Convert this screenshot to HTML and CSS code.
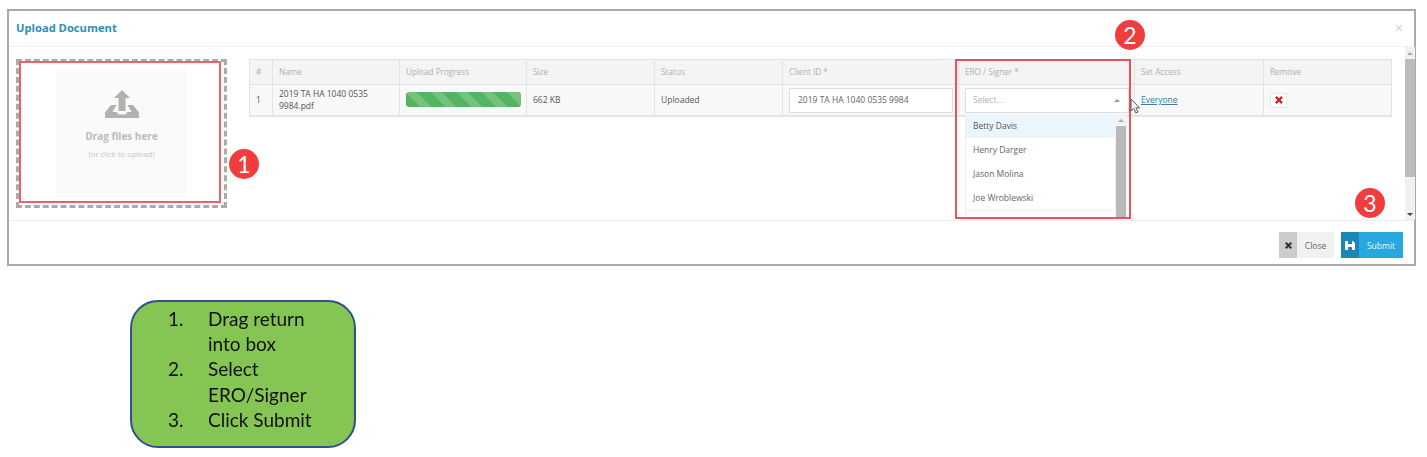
FILE: index.html
```html
<!DOCTYPE html>
<html lang="en">
<head>
<meta charset="utf-8">
<title>Upload Document</title>
<link rel="stylesheet" href="styles.css">
</head>
<body>
<div class="page">
  <section class="modal">
    <header class="modal-head">
      <h1>Upload Document</h1>
      <span class="dismiss">×</span>
    </header>
    <div class="modal-body">
      <div class="dropzone">
        <div class="drop-inner">
          <svg class="upload-icon" width="34" height="28" viewBox="0 0 34 28"><path d="M17 0L25 8H20.500V21H13.500V8H9Z"/><path d="M6 15H11.500L7.500 22H11.500L13.500 24.500H20.500L22.500 22H26.500L22.500 15H28L34 22.500V28H0V22.500Z"/></svg>
          <div class="drop-title">Drag files here</div>
          <div class="drop-sub">(or click to upload)</div>
        </div>
      </div>
      <table class="files">
        <colgroup>
          <col class="c-num"><col class="c-name"><col class="c-prog"><col class="c-size"><col class="c-status"><col class="c-client"><col class="c-ero"><col class="c-access"><col class="c-remove">
        </colgroup>
        <thead>
          <tr><th>#</th><th>Name</th><th>Upload Progress</th><th>Size</th><th>Status</th><th>Client ID *</th><th>ERO / Signer *</th><th>Set Access</th><th>Remove</th></tr>
        </thead>
        <tbody>
          <tr>
            <td>1</td>
            <td>2019 TA HA 1040 0535 9984.pdf</td>
            <td class="progress-cell"><div class="progress"></div></td>
            <td>662 KB</td>
            <td>Uploaded</td>
            <td class="field-cell"><div class="input">2019 TA HA 1040 0535 9984</div></td>
            <td class="field-cell ero-cell">
              <div class="select"><span>Select...</span><i class="caret"></i></div>
              <div class="dropdown">
                <ul>
                  <li class="active">Betty Davis</li>
                  <li>Henry Darger</li>
                  <li>Jason Molina</li>
                  <li class="last">Joe Wroblewski</li>
                </ul>
                <div class="mini-scroll"><i class="up"></i><b></b></div>
              </div>
            </td>
            <td><a class="link" href="#">Everyone</a></td>
            <td><span class="remove"><svg width="10" height="10" viewBox="0 0 9 9"><path d="M1 2.500L2.500 1L4.500 3L6.500 1L8 2.500L6 4.500L8 6.500L6.500 8L4.500 6L2.500 8L1 6.500L3 4.500Z"/></svg></span></td>
          </tr>
        </tbody>
      </table>
      <div class="scrollbar"><i class="up"></i><b></b><i class="down"></i></div>
    </div>
    <footer class="modal-foot">
      <button class="btn btn-close"><span class="btn-icon"><svg width="9" height="9" viewBox="0 0 9 9"><path d="M1 2.500L2.500 1L4.500 3L6.500 1L8 2.500L6 4.500L8 6.500L6.500 8L4.500 6L2.500 8L1 6.500L3 4.500Z"/></svg></span><span class="btn-text">Close</span></button>
      <button class="btn btn-submit"><span class="btn-icon"><svg width="10" height="9" viewBox="0 0 10 9"><path d="M0 1Q0 0 1 0H3V3H7V0H8L10 2V8Q10 9 9 9H7V6H3V9H1Q0 9 0 8Z"/></svg></span><span class="btn-text">Submit</span></button>
    </footer>
  </section>

  <div class="mark mark-drop"></div>
  <div class="mark mark-ero"></div>
  <div class="badge badge-1">1</div>
  <div class="badge badge-2">2</div>
  <div class="badge badge-3">3</div>
  <svg class="cursor" width="11" height="16" viewBox="0 0 11 16"><path d="M1 1V13L3.800 10.500L6 15L8 14L5.800 9.800H9.500Z"/></svg>

  <ol class="steps">
    <li><span>1.</span><span>Drag return into box</span></li>
    <li><span>2.</span><span>Select ERO/Signer</span></li>
    <li><span>3.</span><span>Click Submit</span></li>
  </ol>
</div>
</body>
</html>
```

FILE: styles.css
```css
* { box-sizing: border-box; }
html, body { margin: 0; background: #fff; }
body { font-family: "Open Sans", "Noto Sans", sans-serif; font-size: 8.500px; color: #555; }

.page {
  position: relative;
  width: 1427px;
  height: 457px;
  overflow: hidden;
  padding: 9px 0 0 7px;
  filter: blur(0.35px);
}

.modal {
  width: 1409px;
  height: 257px;
  border: 2px solid #a9a9a9;
  display: flex;
  flex-direction: column;
  background: #fff;
}

.modal-head {
  height: 36px;
  flex: none;
  display: flex;
  align-items: center;
  justify-content: space-between;
  padding: 0 11px 2px 7px;
  border-bottom: 1px solid #f0f0f0;
}
.modal-head h1 { margin: 0; font-size: 11.200px; font-weight: 700; color: #2b8fbb; }
.dismiss { font-size: 14px; color: #ccc; line-height: 1; }

.modal-body {
  height: 173px;
  flex: none;
  display: flex;
  align-items: flex-start;
  padding-left: 7px;
}

.dropzone {
  width: 211px;
  height: 149px;
  margin-top: 12px;
  border: 3px dashed #ababab;
  padding: 7px 37px 8px;
  flex: none;
}
.drop-inner {
  height: 100%;
  background: #fafafa;
  display: flex;
  flex-direction: column;
  align-items: center;
  padding-top: 21px;
  color: #bdbdbd;
}
.upload-icon { fill: #b5b1ac; }
.drop-title { margin-top: 11px; font-size: 10px; font-weight: 700; line-height: 14px; color: #bcbcbc; }
.drop-sub { margin-top: 6px; font-size: 7.700px; line-height: 11px; color: #c4c4c4; }

.files {
  width: 1142px;
  margin: 12px 13px 0 22px;
  flex: none;
  table-layout: fixed;
  border-collapse: collapse;
  border: 1px solid #e4e4e4;
  border-bottom-width: 2px;
}
.c-num { width: 23px; }
.c-name { width: 127px; }
.c-prog { width: 127px; }
.c-size { width: 128px; }
.c-status { width: 128px; }
.c-client { width: 176px; }
.c-ero { width: 176px; }
.c-access { width: 129px; }
.c-remove { width: 128px; }

.files th, .files td {
  border-left: 1px solid #e4e4e4;
  padding: 0 6px;
  text-align: left;
  font-size: 8.500px;
}
.files th {
  height: 25px;
  padding-bottom: 2px;
  font-size: 8.200px;
  font-weight: 400;
  color: #b0b0b0;
  background: #f4f4f4;
  border-bottom: 1px solid #e4e4e4;
}
.files td {
  height: 31px;
  padding-top: 1px;
  background: #f8f8f8;
  line-height: 12px;
  color: #555;
}
.files .field-cell { padding: 1px 5px 0 6px; }
.files .progress-cell { padding: 0 5px 0 6px; }

.progress {
  height: 15px;
  border-radius: 3px;
  background: repeating-linear-gradient(45deg, #55b45f 0 10px, #74c27b 10px 18px);
}

.input, .select {
  height: 25px;
  background: #fff;
  border: 1px solid #dedede;
  display: flex;
  align-items: center;
  color: #666;
}
.input { padding-left: 8px; }
.select { justify-content: space-between; padding: 0 8px 0 7px; color: #b5b5b5; }
.caret {
  border-left: 3px solid transparent;
  border-right: 3px solid transparent;
  border-bottom: 3px solid #999;
}

.ero-cell { position: relative; }
.dropdown {
  position: absolute;
  left: 6px;
  right: 7px;
  top: 29px;
  height: 105px;
  background: #fff;
  border-left: 1px solid #eee;
  display: flex;
  overflow: hidden;
  z-index: 2;
}
.dropdown ul { flex: 1; margin: 0; padding: 0; list-style: none; }
.dropdown li {
  height: 24.200px;
  padding-left: 7px;
  display: flex;
  align-items: center;
  color: #666;
}
.dropdown li.active { background: #ebf5fc; color: #555; }
.dropdown li.last { border-bottom: 1px solid #eee; }
.mini-scroll { width: 12px; flex: none; background: #f3f3f3; padding: 0 1px; display: flex; flex-direction: column; }
.mini-scroll b { flex: 1; background: #b9b9b9; }

.up, .down { display: block; width: 6px; margin: 0 auto; flex: none; border-left: 3px solid transparent; border-right: 3px solid transparent; }
.up { border-bottom: 3px solid #aaa; margin-top: 5px; margin-bottom: 4px; }
.down { border-top: 3px solid #444; margin-top: 6px; margin-bottom: 4px; }

.link { color: #3b7ea8; text-decoration: underline; }
.remove {
  display: flex;
  align-items: center;
  justify-content: center;
  width: 17px;
  height: 15px;
  background: #fff;
  border: 1px solid #e8e8e8;
}
.remove svg { fill: #d4202f; }

.scrollbar {
  width: 10px;
  height: 173px;
  flex: none;
  background: #f1f1f1;
  display: flex;
  flex-direction: column;
}
.scrollbar b { height: 118px; background: #bcbcbc; margin-bottom: auto; }

.modal-foot {
  flex: 1;
  border-top: 1px solid #eee;
  display: flex;
  justify-content: flex-end;
  align-items: flex-start;
  gap: 7px;
  padding: 11px 11px 0 0;
}
.btn {
  display: flex;
  align-items: stretch;
  height: 26px;
  padding: 0;
  border: 0;
  font: inherit;
  font-size: 8.500px;
}
.btn-icon { display: flex; align-items: center; justify-content: center; width: 18px; }
.btn-text { flex: 1; display: flex; align-items: center; justify-content: center; }
.btn-close { width: 55px; background: #f1f1f1; color: #666; }
.btn-close .btn-icon { background: #ccc; }
.btn-close svg { fill: #333; }
.btn-submit { width: 62px; background: #27a8e0; color: #e8f6fc; }
.btn-submit .btn-icon { background: #1b86b8; }
.btn-submit svg { fill: #fff; }

.mark { position: absolute; border: 2px solid #e8525a; z-index: 3; }
.mark-drop { left: 19px; top: 61px; width: 202px; height: 142px; border-color: #e9636b; }
.mark-ero { left: 955px; top: 59px; width: 176px; height: 160px; }

.badge {
  position: absolute;
  width: 30px;
  height: 30px;
  border-radius: 50%;
  background: #f23d3f;
  color: #fff;
  font-family: "Lato", sans-serif;
  font-size: 23px;
  line-height: 30px;
  text-align: center;
  z-index: 4;
}
.badge-1 { left: 229px; top: 149px; }
.badge-2 { left: 1115px; top: 20px; }
.badge-3 { left: 1355px; top: 188px; }

.cursor { position: absolute; left: 1130px; top: 98px; z-index: 4; fill: #fff; stroke: #555; stroke-width: 1; }

.steps {
  position: absolute;
  left: 130px;
  top: 300px;
  width: 226px;
  height: 148px;
  margin: 0;
  padding: 4px 0 0 36px;
  list-style: none;
  background: #84c553;
  border: 2px solid #2f528f;
  border-radius: 28px;
  font-family: "Lato", sans-serif;
  font-size: 19px;
  line-height: 25.200px;
  color: #111;
}
.steps li { display: grid; grid-template-columns: 40px 116px; }
```
